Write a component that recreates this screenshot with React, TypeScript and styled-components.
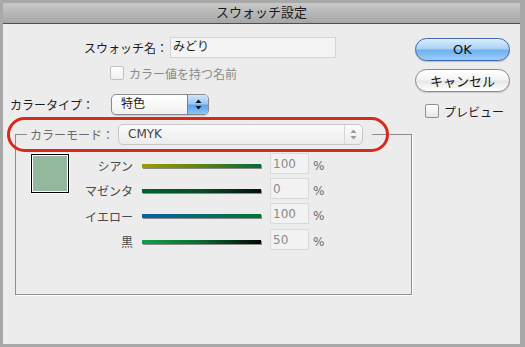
import styled, { createGlobalStyle } from "styled-components";

const Global = createGlobalStyle`
  html, body { margin: 0; padding: 0; background: #a8a8a8; }
  body { font-family: "DejaVu Sans", "Noto Sans CJK JP", sans-serif; font-size: 12px; color: #1c1c1c; }
`;

type Slider = { name: string; value: string; from: string; mid: string; to: string };

const sliders: Slider[] = [
  { name: "シアン", value: "100", from: "#a09a00", mid: "#5a8412", to: "#006a3a" },
  { name: "マゼンタ", value: "0", from: "#00622e", mid: "#0a4a26", to: "#05100c" },
  { name: "イエロー", value: "100", from: "#0b5ea6", mid: "#046c6a", to: "#007238" },
  { name: "黒", value: "50", from: "#10a248", mid: "#0a6a30", to: "#020604" },
];

function Arrows({ color }: { color: string }) {
  return (
    <svg width="7" height="11" viewBox="0 0 7 11">
      <path d="M3.5 0.5 L6.5 4 L0.5 4 Z" fill={color} />
      <path d="M3.5 10.5 L6.5 7 L0.5 7 Z" fill={color} />
    </svg>
  );
}

export default function App() {
  return (
    <>
      <Global />
      <Win>
        <TitleBar>スウォッチ設定</TitleBar>
        <Content>
          <Left>
            <NameRow>
              <NameLabel>スウォッチ名：</NameLabel>
              <TextField>みどり</TextField>
            </NameRow>
            <CheckRow>
              <Check disabled />
              <CheckLabel disabled>カラー値を持つ名前</CheckLabel>
            </CheckRow>
            <TypeRow>
              <TypeLabel>カラータイプ：</TypeLabel>
              <Popup>
                <PopupText>特色</PopupText>
                <Stepper><Arrows color="#111" /></Stepper>
              </Popup>
            </TypeRow>
            <Group>
              <Legend>
                <ModeLabel>カラーモード：</ModeLabel>
                <ModePopup>
                  <ModeText>CMYK</ModeText>
                  <ModeStepper><Arrows color="#9a9a9a" /></ModeStepper>
                </ModePopup>
              </Legend>
              <GroupBody>
                <Swatch />
                <SliderGrid>
                  {sliders.map(s => (
                    <SliderRow key={s.name}>
                      <SliderLabel>{s.name}</SliderLabel>
                      <Bar style={{ background: `linear-gradient(to right, ${s.from}, ${s.mid}, ${s.to})` }} />
                      <ValueField>{s.value}</ValueField>
                      <Pct>%</Pct>
                    </SliderRow>
                  ))}
                </SliderGrid>
              </GroupBody>
            </Group>
          </Left>
          <Right>
            <OkButton>OK</OkButton>
            <CancelButton>キャンセル</CancelButton>
            <PreviewRow>
              <Check />
              <CheckLabel>プレビュー</CheckLabel>
            </PreviewRow>
          </Right>
          <Highlight />
        </Content>
      </Win>
    </>
  );
}

const Win = styled.div`
  margin: 3px 5px 3px 3px; height: 341px;
  display: flex; flex-direction: column;
  background: #ececec;
`;
const TitleBar = styled.div`
  height: 20px; line-height: 20px; text-align: center;
  font-size: 13px; color: #1a1a1a;
  background: linear-gradient(#c8c8c8, #a6a6a6);
  border-bottom: 1px solid #4e4e4e;
`;
const Content = styled.div`
  position: relative; flex: 1;
  display: flex;
`;
const Left = styled.div`
  width: 409px; display: flex; flex-direction: column;
`;
const NameRow = styled.div`
  margin-top: 13px; display: flex; align-items: center; height: 21px;
`;
const NameLabel = styled.span`
  width: 165px; text-align: right; margin-right: 2px;
`;
const TextField = styled.div`
  width: 162px; height: 19px; line-height: 19px; padding-left: 2px;
  border: 1px solid #d4d4d4; background: #f4f4f4; color: #222;
`;
const CheckRow = styled.div`
  margin-top: 8px; margin-left: 107px; display: flex; align-items: center; gap: 5px; height: 14px;
`;
const Check = styled.span<{ disabled?: boolean }>`
  width: 12px; height: 12px; border-radius: 2px;
  border: 1px solid ${p => p.disabled ? "#c2c2c2" : "#8e8e8e"};
  background: linear-gradient(#ffffff, ${p => p.disabled ? "#f0f0f0" : "#e6e6e6"});
`;
const CheckLabel = styled.span<{ disabled?: boolean }>`
  color: ${p => p.disabled ? "#8a8a8a" : "#1c1c1c"};
`;
const TypeRow = styled.div`
  margin-top: 14px; display: flex; align-items: center; height: 21px;
`;
const TypeLabel = styled.span`
  padding-left: 7px; box-sizing: border-box; width: 108px;
`;
const Popup = styled.div`
  width: 98px; height: 21px; box-sizing: border-box; display: flex;
  border: 1px solid #8c8c8c; border-radius: 5px; overflow: hidden;
  background: linear-gradient(#ffffff, #f1f1f1);
  box-shadow: 0 1px 1px rgba(0,0,0,.15);
`;
const PopupText = styled.span`
  flex: 1; padding-left: 9px; line-height: 19px;
`;
const Stepper = styled.span`
  width: 20px; display: flex; align-items: center; justify-content: center;
  border-left: 1px solid #5a86c0;
  background: linear-gradient(#cfe5fb 0%, #9cc8f3 45%, #5da3ec 55%, #8ec4f6 100%);
`;
const Group = styled.fieldset`
  margin: 9px 0 0 12px; padding: 0; width: 397px; height: 171px; box-sizing: border-box;
  border: 1px solid #8f8f8f; box-shadow: 1px 1px 0 #ffffff;
`;
const Legend = styled.legend`
  margin-left: 11px; padding: 0 9px 0 3px; display: flex; align-items: center;
  background: #ececec;
`;
const ModeLabel = styled.span`
  width: 88px; color: #6a6a6a;
`;
const ModePopup = styled.div`
  width: 245px; height: 21px; box-sizing: border-box; display: flex;
  border: 1px solid #c6c6c6; border-radius: 5px;
  background: linear-gradient(#fbfbfb, #ececec);
`;
const ModeText = styled.span`
  flex: 1; padding-left: 9px; line-height: 19px; color: #444;
`;
const ModeStepper = styled.span`
  width: 17px; display: flex; align-items: center; justify-content: center;
  border-left: 1px solid #d6d6d6;
`;
const GroupBody = styled.div`
  display: flex; padding: 8px 0 0 15px;
`;
const Swatch = styled.div`
  width: 36px; height: 37px; border: 1px solid #000;
  box-shadow: inset 0 0 0 1px #fff; outline: 1px solid #fff;
  background: #93b89d; flex-shrink: 0;
  margin-top: 1px;
`;
const SliderGrid = styled.div`
  margin-top: 2px;
  display: grid; grid-auto-rows: 21px; row-gap: 4.4px;
`;
const SliderRow = styled.div`
  display: grid; grid-template-columns: 64px 119px 39px auto; column-gap: 9px;
  align-items: center;
`;
const SliderLabel = styled.span`
  text-align: right; color: #4a4a4a;
`;
const Bar = styled.span`
  height: 4px; box-shadow: 1px 1px 0 #8a8a8a;
`;
const ValueField = styled.span`
  height: 19px; line-height: 21px; padding-left: 2px; margin-top: -5px;
  border: 1px solid #dadada; background: #f2f2f2; color: #8a8a8a;
`;
const Pct = styled.span`
  margin-left: -5px; color: #6a6a6a;
`;
const Right = styled.div`
  margin-left: 3px; padding-top: 14px; display: flex; flex-direction: column; width: 95px;
`;
const Pill = styled.div`
  height: 23px; box-sizing: border-box; border-radius: 12px;
  display: flex; align-items: center; justify-content: center;
  font-size: 13px; color: #111;
`;
const OkButton = styled(Pill)`
  border: 1px solid #3d6aaa;
  background: linear-gradient(#dcedfd 0%, #a9d0f7 48%, #6eb0ef 52%, #9ccdf8 100%);
  box-shadow: 0 1px 1px rgba(0,0,0,.2);
`;
const CancelButton = styled(Pill)`
  margin-top: 8px; border: 1px solid #8a8a8a;
  background: linear-gradient(#ffffff 0%, #f3f3f3 48%, #e6e6e6 52%, #ffffff 100%);
  box-shadow: 0 1px 1px rgba(0,0,0,.15);
`;
const PreviewRow = styled.div`
  margin: 12px 0 0 10px; display: flex; align-items: center; gap: 5px; height: 14px;
`;
const Highlight = styled.div`
  position: absolute; left: 4px; top: 93px; width: 382px; height: 35px; box-sizing: border-box;
  border: 3px solid #d8291b; border-radius: 18px; pointer-events: none;
`;
